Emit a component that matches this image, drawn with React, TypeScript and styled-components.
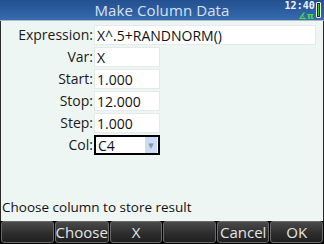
import { Fragment } from "react";
import styled, { createGlobalStyle } from "styled-components";

const GlobalStyle = createGlobalStyle`
  html, body {
    margin: 0;
    padding: 0;
    background: #000;
  }
  body {
    font-family: "Open Sans", "DejaVu Sans", sans-serif;
  }
`;

const Screen = styled.div`
  width: 324px;
  height: 244px;
  display: flex;
  flex-direction: column;
  background: #eef6f4;
  overflow: hidden;
`;

const TitleBar = styled.div`
  position: relative;
  height: 20px;
  flex: none;
  display: flex;
  align-items: center;
  justify-content: center;
  background: linear-gradient(#24508f, #2f62a6 70%, #3a6cae);
  border-bottom: 1px solid #aab8c8;
  color: #d9e1ee;
  font-size: 15px;
  letter-spacing: 0.1px;
`;

const Status = styled.div`
  position: absolute;
  right: 3px;
  top: 1px;
  display: flex;
  gap: 1px;
`;

const StatusText = styled.div`
  display: flex;
  flex-direction: column;
  align-items: flex-end;
  gap: 1px;
`;

const Clock = styled.span`
  font-family: "DejaVu Sans Mono", monospace;
  font-size: 10px;
  font-weight: bold;
  line-height: 10px;
  color: #f2f4f8;
`;

const ModeIcon = styled.span`
  font-family: "DejaVu Sans", sans-serif;
  font-size: 9px;
  line-height: 8px;
  height: 8px;
  color: #3fe03a;
  font-weight: bold;
  margin-right: 1px;
`;

const Battery = styled.div`
  width: 3px;
  height: 12px;
  margin-top: 1px;
  border: 1px solid #f0f0f0;
  border-radius: 1px;
  padding: 1px 0;
  background: #2ecc28 content-box;
  box-shadow: inset 0 0 0 1px #1a2a40;
`;

const Body = styled.div`
  flex: 1;
  display: flex;
  flex-direction: column;
  border-left: 1px solid #2a2a2a;
  border-right: 1px solid #2a2a2a;
  padding: 4px 7px 0 0;
`;

const Form = styled.div`
  display: grid;
  grid-template-columns: 92px 1fr;
  column-gap: 1px;
  row-gap: 2px;
`;

const Label = styled.div`
  text-align: right;
  font-size: 14px;
  line-height: 20px;
  color: #1a1a1a;
`;

const Field = styled.div<{ $wide?: boolean; $active?: boolean }>`
  width: ${(p) => (p.$wide ? "222px" : "66px")};
  height: 20px;
  box-sizing: border-box;
  display: flex;
  align-items: center;
  background: #fff;
  border: ${(p) => (p.$active ? "2px solid #000" : "1px solid #e4eaea")};
  padding-left: 2px;
  font-size: 14px;
  color: #111;
`;

const FieldValue = styled.span`
  flex: 1;
`;

const DropArrow = styled.div`
  width: 12px;
  align-self: stretch;
  background: #c8dcf6;
  display: flex;
  align-items: center;
  justify-content: center;
  color: #8a96a6;
  font-size: 7px;
  margin-right: 1px;
`;

const Spacer = styled.div`
  flex: 1;
`;

const Help = styled.div`
  padding-left: 1px;
  font-size: 13.5px;
  line-height: 16px;
  color: #111;
  margin-bottom: 6px;
`;

const Menu = styled.div`
  height: 22px;
  flex: none;
  display: grid;
  grid-template-columns: repeat(6, 1fr);
  gap: 1px;
  padding: 0 1px 1px;
  background: #000;
`;

const MenuKey = styled.div`
  border-radius: 3px;
  border: 1px solid #6a6a6a;
  background: linear-gradient(#4a4a4a, #2e2e2e 55%, #202020);
  color: #e4e4e4;
  font-size: 15px;
  display: flex;
  align-items: center;
  justify-content: center;
`;

const rows = [
  { label: "Var:", value: "X" },
  { label: "Start:", value: "1.000" },
  { label: "Stop:", value: "12.000" },
  { label: "Step:", value: "1.000" },
];

const keys = ["", "Choose", "X", "", "Cancel", "OK"];

export default function App() {
  return (
    <>
      <GlobalStyle />
      <Screen>
        <TitleBar>
          Make Column Data
          <Status>
            <StatusText>
              <Clock>12:40</Clock>
              <ModeIcon>∡π</ModeIcon>
            </StatusText>
            <Battery />
          </Status>
        </TitleBar>
        <Body>
          <Form>
            <Label>Expression:</Label>
            <Field $wide>X^.5+RANDNORM()</Field>
            {rows.map((r) => (
              <Fragment key={r.label}>
                <Label>{r.label}</Label>
                <Field>{r.value}</Field>
              </Fragment>
            ))}
            <Label>Col:</Label>
            <Field $active>
              <FieldValue>C4</FieldValue>
              <DropArrow>▼</DropArrow>
            </Field>
          </Form>
          <Spacer />
          <Help>Choose column to store result</Help>
        </Body>
        <Menu>
          {keys.map((k, i) => (
            <MenuKey key={i}>{k}</MenuKey>
          ))}
        </Menu>
      </Screen>
    </>
  );
}
